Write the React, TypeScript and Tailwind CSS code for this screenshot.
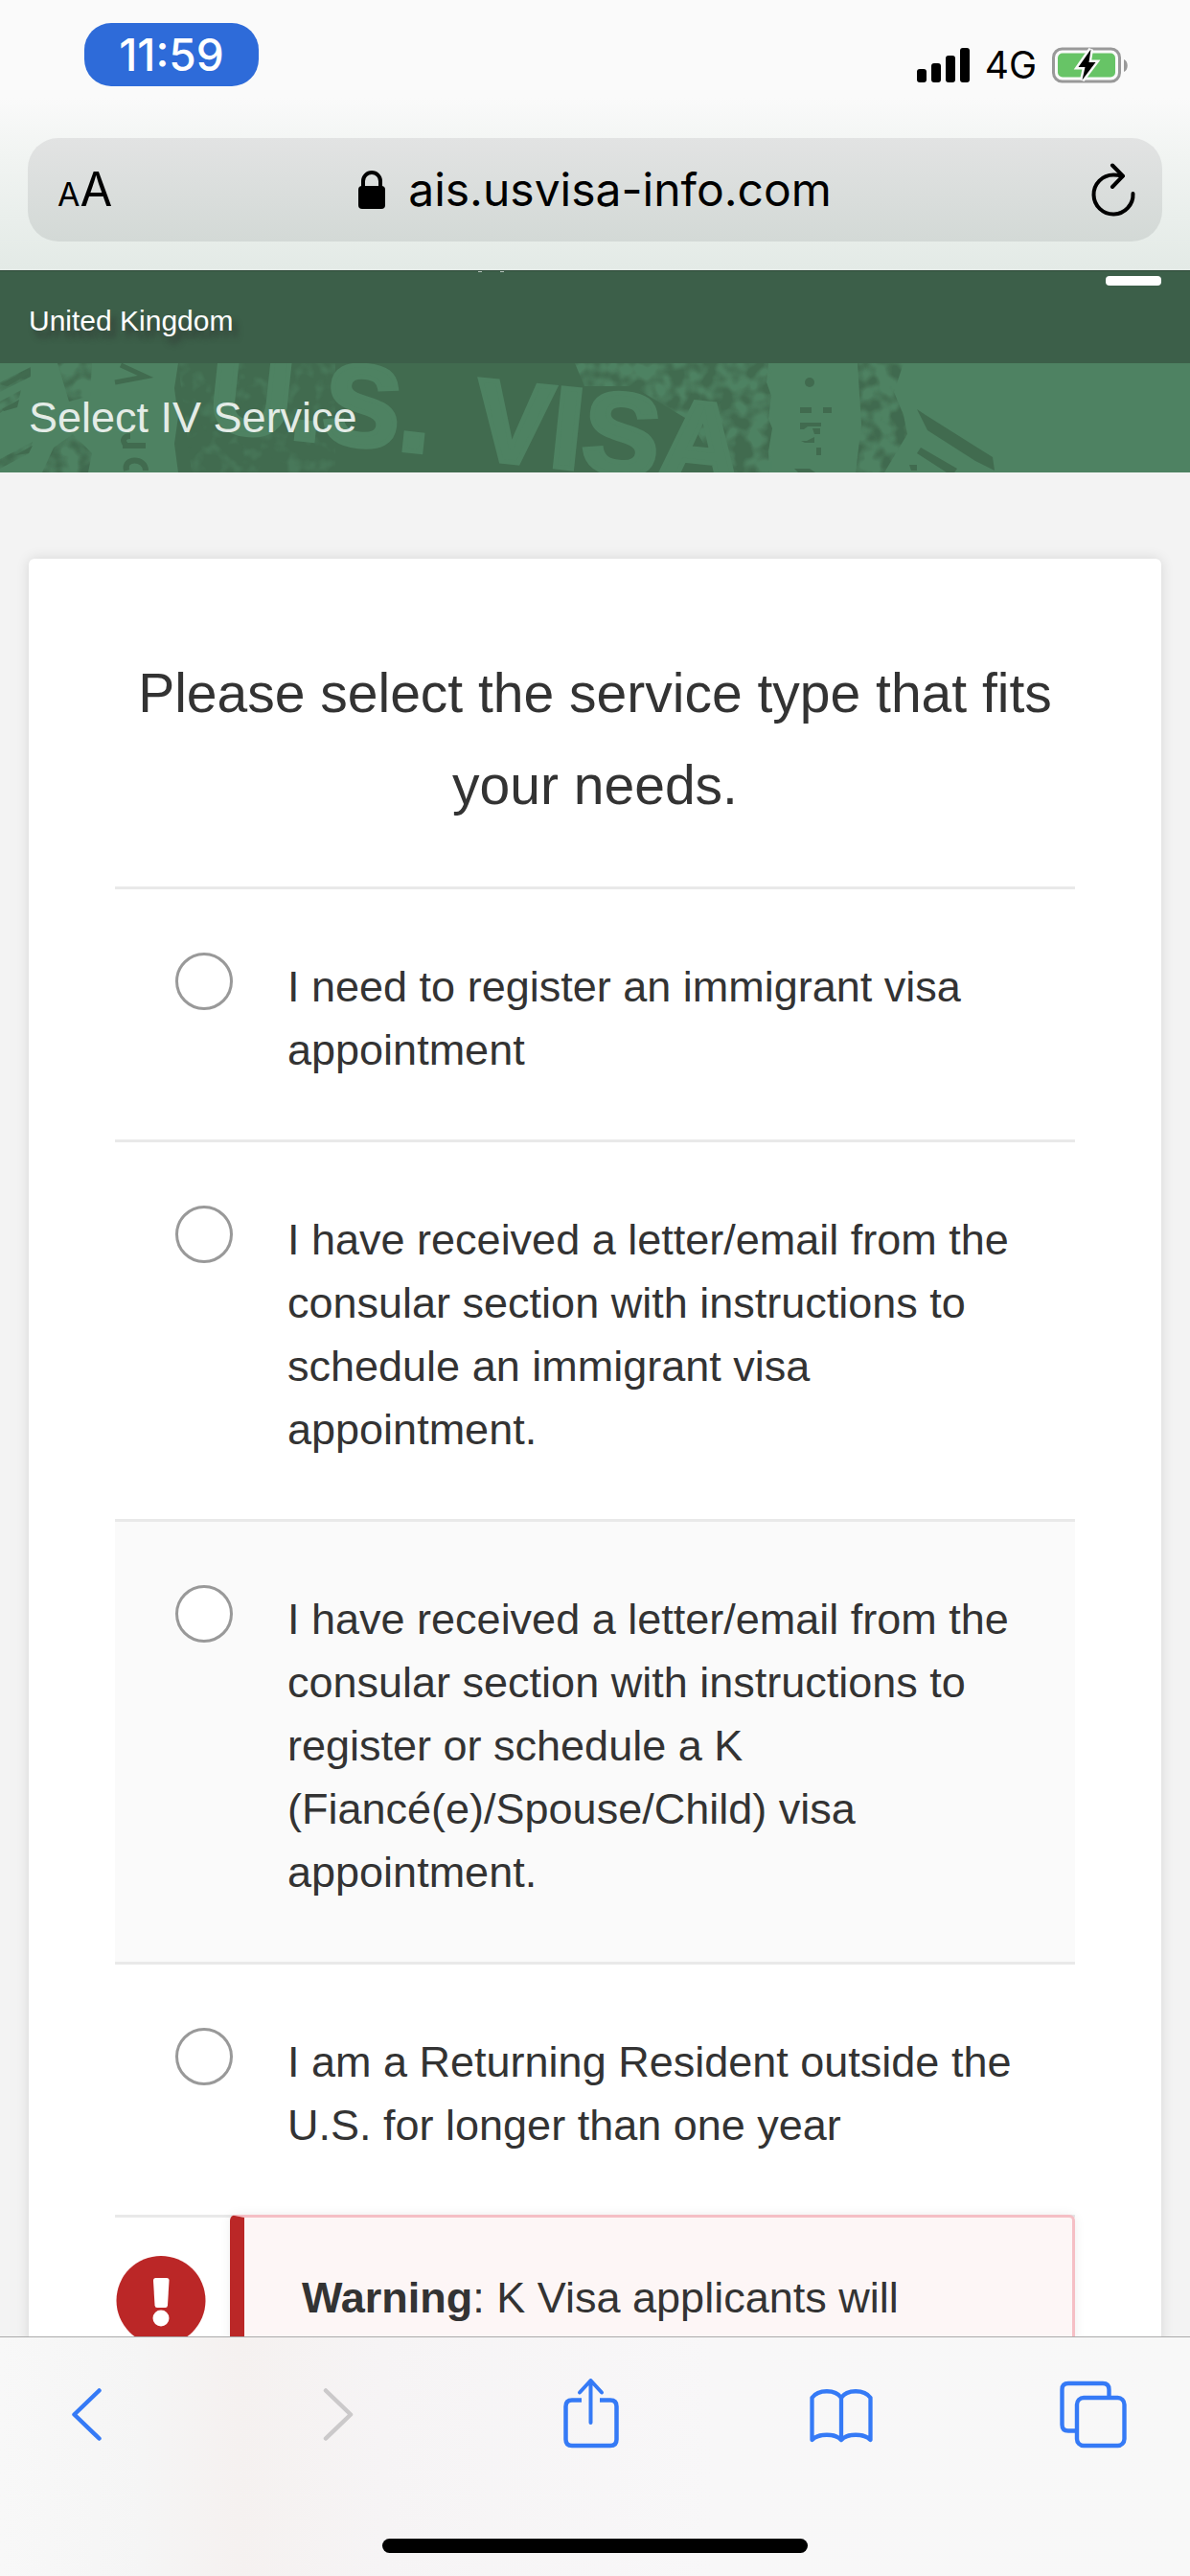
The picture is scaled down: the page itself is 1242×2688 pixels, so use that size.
import { useState } from "react";

const SERVICES = [
  { id: "register", label: "I need to register an immigrant visa appointment" },
  {
    id: "letter-iv",
    label:
      "I have received a letter/email from the consular section with instructions to schedule an immigrant visa appointment.",
  },
  {
    id: "letter-k",
    label:
      "I have received a letter/email from the consular section with instructions to register or schedule a K (Fiancé(e)/Spouse/Child) visa appointment.",
    shaded: true,
  },
  { id: "returning", label: "I am a Returning Resident outside the U.S. for longer than one year" },
];

function SignalIcon() {
  return (
    <svg width="55" height="36" viewBox="0 0 55 36" aria-hidden="true">
      <rect x="0" y="22" width="10" height="14" rx="3" />
      <rect x="15" y="16" width="10" height="20" rx="3" />
      <rect x="30" y="8" width="10" height="28" rx="3" />
      <rect x="45" y="0" width="10" height="36" rx="3" />
    </svg>
  );
}

function BatteryIcon() {
  return (
    <svg width="80" height="40" viewBox="0 0 80 40" aria-hidden="true">
      <rect x="1.5" y="3" width="69" height="34" rx="9" fill="none" stroke="#999999" strokeWidth="3" />
      <path d="M75 14c5 1.500 5 11.500 0 13z" fill="#999999" />
      <rect x="6" y="7.500" width="60" height="25" rx="5" fill="#67c466" />
      <path
        d="M40.500 3.500 27.500 22H34.500L31.500 35.500 45.500 17H38.500z"
        fill="#000"
        stroke="#fafafa"
        strokeWidth="5"
        strokeLinejoin="miter"
        paintOrder="stroke"
      />
    </svg>
  );
}

function LockIcon() {
  return (
    <svg width="28" height="40" viewBox="0 0 28 40" aria-hidden="true">
      <rect x="0" y="16" width="28" height="24" rx="4" />
      <path d="M5 19V11a9 9 0 0 1 18 0v8" fill="none" stroke="#000" strokeWidth="4" />
    </svg>
  );
}

function ReloadIcon() {
  return (
    <svg width="47" height="56" viewBox="0 0 47 56" fill="none" stroke="#000" strokeWidth="4" strokeLinecap="round" strokeLinejoin="round" aria-hidden="true">
      <path d="M44.500 32A20.500 20.500 0 1 1 24 12.500c3.500 0 6.500.500 9.500 1.200" />
      <path d="M23 2.500 34 13.700 23 25" />
    </svg>
  );
}

function BannerArt() {
  return (
    <svg
      className="absolute inset-0 h-full w-full"
      viewBox="0 0 1242 114"
      preserveAspectRatio="xMinYMin slice"
      aria-hidden="true"
    >
      <defs>
        <filter id="worn" x="0" y="0" width="100%" height="100%">
          <feTurbulence type="fractalNoise" baseFrequency="0.06" numOctaves="2" seed="8" result="n" />
          <feColorMatrix in="n" type="matrix" values="0 0 0 0 0  0 0 0 0 0  0 0 0 0 0  3.5 0 0 0 -1.3" result="m" />
          <feComposite in="SourceGraphic" in2="m" operator="in" />
        </filter>
        <filter id="faint" x="0" y="0" width="100%" height="100%">
          <feTurbulence type="fractalNoise" baseFrequency="0.07" numOctaves="2" seed="3" result="n" />
          <feColorMatrix in="n" type="matrix" values="0 0 0 0 0  0 0 0 0 0  0 0 0 0 0  3 0 0 0 -1.5" result="m" />
          <feComposite in="SourceGraphic" in2="m" operator="in" />
        </filter>
      </defs>
      <rect width="1242" height="114" fill="#4e8262" />
      <path d="M186 0H802l-2 20 5 14-3 24 4 10-4 24 1 22H186l-4-30 4-28-4-30z" fill="#416b4f" />
      <g filter="url(#worn)" fill="#4e8262">
        <path d="M600 0H806V114H752L720 60 660 24H610z" />
      </g>
      <g filter="url(#faint)" fill="#4e8262" opacity="0.6">
        <path d="M186 0H350V114H200z" />
      </g>
      <g
        fill="#4e8262"
        stroke="#4e8262"
        strokeWidth="5"
        fontFamily="Liberation Sans, Arial, sans-serif"
        fontWeight="700"
        fontSize="120"
      >
        <text x="215" y="69" transform="rotate(6 215 69)">U.S.</text>
        <text x="492" y="99" transform="rotate(6 492 99)">VISA</text>
      </g>
      <g filter="url(#worn)" fill="#416b4f">
        <path d="M0 20 32 4v10L0 30zM0 40l22-12-2 8L0 52zM0 100l34-18-4 12-30 16z" />
        <path d="M60 0h36l-2 34-22 6zM44 114l12-26 20-14 20 20-4 20z" />
        <path d="M895 0h48l-10 30 10 24 4 20-24 40h-30l6-50z" />
      </g>
      <g fill="#416b4f">
        <path d="M0 22 30 6 30 11 8 24zM2 48 20 38 18 46 4 50zM16 96 34 86 30 94z" />
        <path d="M126 2 152 14 120 20" fill="none" stroke="#416b4f" strokeWidth="5" />
        <path d="M128 86h24M132 86c-6-6-2-10 4-10M132 112c-4-14 20-14 20 0" fill="none" stroke="#416b4f" strokeWidth="6" />
        <circle cx="845" cy="20" r="5" />
        <path d="M835 46h12v6h-12zM859 46h9v6h-9zM835 62h22v4h-14l-4 3h-4zM848 68h8v6h-6zM836 81h6l8-4v6h-10zM852 88h5v8h-5zM829 110h16l6 4h-18z" />
        <path d="M957 48 966 54 1036 98 1038 112 1018 102 968 70zM961 88 999 110 996 114H988L957 94zM949 106h8v6h-6z" />
      </g>
    </svg>
  );
}

function PhoneTop() {
  return (
    <div className="flex h-[282px] shrink-0 flex-col bg-[linear-gradient(#fafafa_0,#fafafa_36%,#f1f4f2_58%,#e3eae6_100%)] text-black">
      <div className="flex h-[144px] items-start justify-between pt-6 pr-[64px] pl-[88px]">
        <div className="flex h-[66px] w-[182px] items-center justify-center rounded-[28px] bg-[#2e6bd9] text-[46px] font-medium text-white">
          11:59
        </div>
        <div className="flex h-[88px] items-center gap-4">
          <SignalIcon />
          <span className="text-[39px]">4G</span>
          <BatteryIcon />
        </div>
      </div>
      <div className="mx-[29px] flex h-[108px] items-center justify-between rounded-[32px] bg-[linear-gradient(#e2e3e3,#d3d9d6)] px-7">
        <button type="button" aria-label="Page settings" className="flex w-[120px] items-baseline pl-[3px]">
          <span className="text-[34px]">A</span>
          <span className="text-[49px]">A</span>
        </button>
        <button type="button" className="flex items-center gap-6">
          <LockIcon />
          <span className="text-[48px]">ais.usvisa-info.com</span>
        </button>
        <button type="button" aria-label="Reload" className="flex w-[120px] justify-end">
          <ReloadIcon />
        </button>
      </div>
    </div>
  );
}

function SiteHeader() {
  return (
    <header className="shrink-0 font-['Liberation_Sans',Arial,sans-serif]">
      <div className="relative flex h-[97px] items-start justify-between border-t border-[#2b4636] bg-[#3c5f49] px-[30px]">
        <span className="absolute top-0 left-[499px] h-px w-1 bg-[#b9c6be]" />
        <span className="absolute top-0 left-[522px] h-px w-1 bg-[#b9c6be]" />
        <a href="#country" className="pt-[34px] text-[30px] leading-[36px] text-white [text-shadow:5px_7px_6px_rgba(45,45,45,0.7)]">
          United Kingdom
        </a>
        <button type="button" aria-label="Menu" className="mt-[5px] h-[10px] w-[58px] rounded-sm bg-white" />
      </div>
      <div className="relative flex h-[114px] items-center overflow-hidden px-[30px]">
        <BannerArt />
        <h1 className="relative text-[45px] text-[#e4ece7]">Select IV Service</h1>
      </div>
    </header>
  );
}

function ServiceForm() {
  const [selected, setSelected] = useState("");
  return (
    <main className="min-h-0 flex-1 overflow-hidden bg-[#f3f3f3] px-[30px] pt-[90px] font-['Liberation_Sans',Arial,sans-serif] text-[#333333]">
      <form className="rounded-[6px] bg-white px-[90px] pt-[92px] pb-[90px] shadow-[0_0_14px_rgba(0,0,0,0.12)]">
        <h2 className="text-center text-[57px] leading-[96px]">
          Please select the service type that fits your needs.
        </h2>
        <div className="mt-[58px] border-t-[3px] border-[#e9e9e9]">
          {SERVICES.map((s) => (
            <label
              key={s.id}
              className={
                s.shaded
                  ? "flex border-b-[3px] border-[#e9e9e9] bg-[#fafafa] px-[63px] pt-[66px] pb-[60px]"
                  : "flex border-b-[3px] border-[#e9e9e9] px-[63px] pt-[66px] pb-[60px]"
              }
            >
              <input
                type="radio"
                name="service"
                value={s.id}
                checked={selected === s.id}
                onChange={() => setSelected(s.id)}
                className="h-[60px] w-[60px] shrink-0 appearance-none rounded-full border-[3px] border-[#999999] bg-white checked:border-[18px]"
              />
              <span className="pt-[3px] pl-[57px] text-[45px] leading-[66px]">{s.label}</span>
            </label>
          ))}
        </div>
        <div className="-mt-[3px] flex">
          <svg width="120" height="150" viewBox="0 0 120 150" className="shrink-0" role="img" aria-label="Alert">
            <circle cx="48" cy="89.500" r="46.500" fill="#bb2727" />
            <path d="M42.500 66h11.500q2.500 0 2.500 2.500l-1.500 26q-.2 2.500-2.500 2.500h-8.500q-2.300 0-2.500-2.500l-1.500-26q0-2.500 2.500-2.500z" fill="#fff" />
            <circle cx="48" cy="108" r="8.500" fill="#fff" />
          </svg>
          <div
            role="alert"
            className="flex-1 rounded-[6px] border-[3px] border-l-[15px] border-[#f5bfc5] border-l-[#bb2727] bg-[#fdf6f6] px-[60px] py-[51px] text-[45px] leading-[66px] shadow-[0_0_12px_rgba(0,0,0,0.07)]"
          >
            <strong>Warning</strong>: K Visa applicants will
          </div>
        </div>
      </form>
    </main>
  );
}

function Toolbar() {
  return (
    <nav
      aria-label="Browser"
      className="flex h-[250px] shrink-0 flex-col items-center justify-between border-t border-[#aaaaaa] bg-[linear-gradient(90deg,#f8f8f8_0,#f5f5f5_12%,#f5f1f0_20%,#f6f4f5_32%,#f8f7f8_60%,#f8f8f8_100%)] pt-[40px] pb-6"
    >
      <div className="flex w-full justify-between pr-[66px] pl-[55px] text-[#357af6]">
        <button type="button" aria-label="Back" className="w-[70px]">
          <svg viewBox="0 0 70 80" fill="none" stroke="currentColor" strokeWidth="4.500" strokeLinecap="round" strokeLinejoin="round">
            <path d="M48.500 15.500 22.500 40.500 48.500 65.500" />
          </svg>
        </button>
        <button type="button" aria-label="Forward" disabled className="w-[70px] text-[#cbc9ca]">
          <svg viewBox="0 0 70 80" fill="none" stroke="currentColor" strokeWidth="4.500" strokeLinecap="round" strokeLinejoin="round">
            <path d="M22 15.500 48 40.500 22 65.500" />
          </svg>
        </button>
        <button type="button" aria-label="Share" className="w-[70px]">
          <svg viewBox="0 0 70 80" fill="none" stroke="currentColor" strokeWidth="4.500" strokeLinejoin="round">
            <path d="M26 25.500H16q-6.500 0-6.500 6.500V66.500q0 6.500 6.500 6.500H56q6.500 0 6.500-6.500V32q0-6.500-6.500-6.500H45" />
            <path d="M35.500 49V5M24 17.500 35.500 5 47 17.500" strokeWidth="4" strokeLinecap="round" />
          </svg>
        </button>
        <button type="button" aria-label="Bookmarks" className="w-[70px]">
          <svg viewBox="0 0 70 80" fill="none" stroke="currentColor" strokeWidth="4.300" strokeLinecap="round" strokeLinejoin="round">
            <path d="M35 23C29 14 11 14 4.500 23V67C11 60 29 60 35 67 41 60 59 60 65.500 67V23C59 14 41 14 35 23V67" />
          </svg>
        </button>
        <button type="button" aria-label="Tabs" className="w-[70px]">
          <svg viewBox="0 0 70 80" fill="none" stroke="currentColor" strokeWidth="4.400" strokeLinejoin="round">
            <path d="M16 57.500H9q-6.500 0-6.500-6.500V14.500Q2.500 8 9 8H45q6.500 0 6.500 6.500V22" />
            <rect x="18" y="23" width="49.500" height="50" rx="7" />
          </svg>
        </button>
      </div>
      <div className="h-[15px] w-[444px] rounded-full bg-black" />
    </nav>
  );
}

export default function App() {
  return (
    <div className="flex h-screen flex-col overflow-hidden bg-[#f3f3f3] font-[Inter,sans-serif]">
      <PhoneTop />
      <SiteHeader />
      <ServiceForm />
      <Toolbar />
    </div>
  );
}
